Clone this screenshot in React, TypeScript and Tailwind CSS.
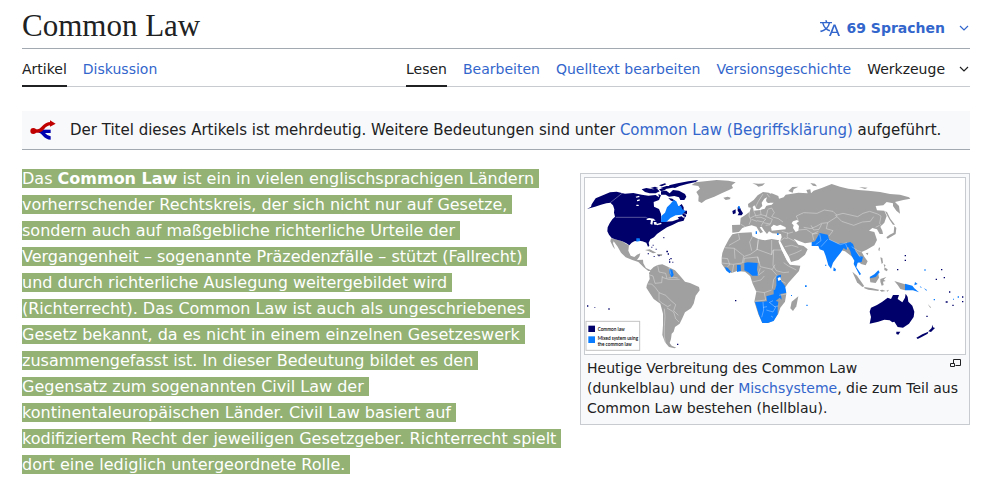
import clsx from "clsx";

const LINK = "text-[#3366cc] hover:underline";

type Tab = { label: string; active?: boolean };

const pageTabs: Tab[] = [{ label: "Artikel", active: true }, { label: "Diskussion" }];

const viewTabs: Tab[] = [
  { label: "Lesen", active: true },
  { label: "Bearbeiten" },
  { label: "Quelltext bearbeiten" },
  { label: "Versionsgeschichte" },
];

function TabLink({ label, active }: Tab) {
  return (
    <a
      href="#"
      aria-current={active ? "page" : undefined}
      className={clsx(
        "-mb-px border-b-2 pt-[10px] pb-[6px] leading-5",
        active ? "border-[#202122] text-[#202122]" : "border-transparent text-[#3366cc]",
      )}
    >
      {label}
    </a>
  );
}

function LanguageIcon() {
  return (
    <svg viewBox="0 0 20 20" className="size-5 fill-current" aria-hidden="true">
      <path d="M20 18h-1.44a.6.6 0 0 1-.4-.12.8.8 0 0 1-.23-.31L17 15h-5l-1 2.54a.8.8 0 0 1-.22.3.6.6 0 0 1-.4.14H9l4.55-11.47h1.89zm-3.53-4.31L14.89 9.5a12 12 0 0 1-.39-1.24q-.09.37-.19.69l-.19.56-1.58 4.19zm-6.3-1.58a13.4 13.4 0 0 1-2.91-1.41 11.46 11.46 0 0 0 2.81-5.37H12V4H7.31a4 4 0 0 0-.2-.56C6.87 2.79 6.6 2 6.6 2l-1.47.5s.4.89.6 1.5H0v1.33h2.15A11.23 11.23 0 0 0 5 10.7a17.2 17.2 0 0 1-5 2.1q.56.82.87 1.38a23.3 23.3 0 0 0 5.22-2.51 15.6 15.6 0 0 0 3.56 1.77zM3.63 5.33h4.91a8.1 8.1 0 0 1-2.45 4.45 9.1 9.1 0 0 1-2.46-4.45" />
    </svg>
  );
}

function Chevron() {
  return (
    <svg viewBox="0 0 12 12" className="size-3" fill="none" stroke="currentColor" strokeWidth="1.2" aria-hidden="true">
      <path d="M2 4l4 4 4-4" />
    </svg>
  );
}

function ForkIcon() {
  return (
    <svg viewBox="0 0 78 60" className="h-5 w-[26px]" aria-hidden="true">
      <g fill="none" strokeWidth="10">
        <path d="M26 34H62" stroke="#0000b0" />
        <path d="M30 34c12 2 12 20 32 20" stroke="#0000b0" />
        <path d="M10 33h14c16 0 14-22 38-22" stroke="#c00000" />
      </g>
      <circle cx="10" cy="33" r="9" fill="#c00000" />
      <path d="M60 1l17 10-17 9z" fill="#c00000" />
    </svg>
  );
}

function EnlargeIcon() {
  return (
    <svg viewBox="0 0 11 9" className="h-[9px] w-[11px]" fill="none" stroke="#202122" aria-hidden="true">
      <path d="M3.500 4V.5h7v6H5.500" />
      <path d="M.5 4.500h4v3h-4z" />
    </svg>
  );
}

// Land without common law
const GREY = [
  // Greenland, Iceland, Svalbard, Novaya Zemlya, Severnaya Zemlya
  "M320 21L332 13L360 10L395 6L430 8L452 13L440 22L444 30L432 36L410 46L388 56L362 66L350 75L340 70L341 54L334 42L345 32L340 24z",
  "M415 59L428 56L437 59L434 64L422 66z",
  "M502 16l18 1 20-1-8 7-12 3-6-5z",
  "M610 39l12-12 18-1-14 8-3 10z",
  "M676 15l14 2 6 8-12-2zM822 27l26 2-8 4z",
  // Mexico and Central America
  "M78 181L90 184L112 190L124 198L132 202L130 218L137 233L148 237L156 230L166 226L163 236L156 246L174 245L175 256L183 270L196 276L208 272L206 278L190 279L176 268L160 252L142 246L122 238L108 224L98 206L86 190L84 196L90 214L84 206L76 190z",
  "M180 216l14-2 20 10-10 2-12-6zM216 228l16 1-2 5-12 0z",
  // South America
  "M206 267L218 261L232 259L250 267L270 277L288 297L300 311L315 315L342 327L344 337L332 353L326 377L318 391L300 403L292 421L284 437L270 447L266 461L260 467L258 483L254 495L260 503L274 509L268 511L252 507L240 493L232 471L234 441L234 407L226 377L206 363L194 345L184 329L186 319L194 303L192 285L200 273z",
  // Scandinavia
  "M490 88L489 78L506 66L518 52L534 42L552 44L562 52L556 62L562 72L550 76L542 70L546 58L538 62L530 74L532 84L522 94L514 92L508 82L500 90z",
  // Europe and Asia
  "M441 141L465 140L467 120L480 112L494 101L498 88L504 88L506 98L526 96L538 92L540 84L560 80L566 74L552 74L548 50L560 46L580 54L582 62L596 58L602 50L640 44L668 46L664 36L676 34L678 46L686 38L710 30L740 18L765 26L790 32L820 36L850 38L885 42L915 48L945 50L972 58L976 62L955 66L930 72L942 84L945 107L934 98L924 84L924 76L905 72L895 82L872 84L876 97L898 98L905 114L898 134L886 146L892 158L894 168L884 168L876 154L862 150L852 158L868 162L876 186L868 202L845 215L830 222L838 236L848 250L842 262L828 258L820 250L780 220L680 193L660 196L640 188L626 182L640 200L656 204L668 214L660 230L640 246L618 252L612 236L598 214L584 192L590 178L588 168L562 166L552 160L546 168L538 158L530 146L524 148L534 162L526 166L514 146L500 142L482 146L472 150L462 162L442 164z",
  // Sakhalin, Japan, Korea, Taiwan, Hainan
  "M900 100l6 2 10 20 14 18-6 0-10-14z",
  "M928 144l6 6-2 18-10 6-14 8-4-4 10-8 12-6z",
  "M882 208l3 2-2 10-3-4zM842 226l8-2-2 8z",
  // Africa
  "M442 169L460 165L500 163L502 175L520 183L540 187L560 183L582 187L588 211L605 245L615 260L646 263L642 279L610 315L600 329L604 347L600 371L586 389L580 407L566 427L550 435L532 435L520 409L508 371L514 341L502 315L496 295L480 281L456 279L440 285L422 275L410 257L410 239L412 225L418 209L432 183z",
  "M640 355L634 385L624 399L616 391L620 371z",
  // Indonesia and the Philippines
  "M802 281l14 12 22 32-6 2-16-14z",
  "M838 327l24 4 20 4-2 4-30-4-12-4zM884 337l8-2 10 4-12 2zM904 338l8-3-4 6z",
  "M854 299l26-12 2 12-10 16-16-2z",
  "M886 303l18-6-8 8 6 4-8 2 2 10-6 2-4-12z",
  "M886 238l6 2 2 14-4 4zM896 258l6 4-4 6zM898 268l10 6-2 6-8-4z",
  "M928 309l12 4 20 6v18l-14-4-8-12z",
  "M1028 378l10 10-2 2zM196 217l5 3-6 2z",
];

const DARK = [
  // Canada and the United States
  "M20 79L32 61L50 53L75 43L95 41L120 47L145 45L170 50L190 53L212 51L222 58L220 48L228 52L222 66L206 72L207 86L222 93L228 108L229 132L262 130L284 122L300 118L296 128L280 132L262 141L246 148L230 158L216 168L207 178L196 184L191 194L193 204L189 206L184 194L172 190L160 188L148 190L140 194L133 202L124 196L112 190L90 184L80 180L72 170L67 160L68 148L74 136L82 124L90 116L87 104L88 94L84 82L76 74L64 76L48 80L30 86L6 93L18 86z",
  // Arctic islands
  "M170 34l14-4 20 4 12-2 8 8-12 6-18 0-14-4z",
  "M196 30l14-4 10 4-10 4zM222 34l18-4 2 6-14 4z",
  "M226 30l18-6 22-1-4 6-24 5zM252 22l26-6 32-6 30-4-8 6-26 6-22 6-14 6-14-2z",
  "M228 40l16-2 10 8 10-10 18 2 18 10 4 8-6 10-12 0-4-8-14-4-16 2-10-6-14 0z",
  "M250 60l12 2 10 8-14-2zM222 22l18-6 4 3-14 6z",
  // Newfoundland and the maritimes
  "M290 78l6 10 0 10 10 0 0 10-16-2-10-4 0-16zM290 106l14 4-2 8-8-4zM278 118l12-3 6 6-12 4z",
  // British Isles
  "M442 99l10-5 0 12-8 3zM458 88l6-2 4 10 6 10-4 6-12 0 4-8-4-6z",
  // Australia, Tasmania, New Zealand
  "M858 389L876 381L892 371L908 359L918 363L924 351L942 351L938 363L952 373L960 359L962 347L968 357L970 371L982 383L988 401L986 417L972 437L954 449L938 447L928 431L922 433L914 427L898 425L880 431L854 437L858 417L854 401z",
  "M934 461l12 0-6 9-6-2z",
  "M1042 440l2 8 6 2-12 12-8-2 10-10zM994 479l18-10 18-8-2 6-18 10-12 6z",
];

const LIGHT = [
  // Quebec, Louisiana, Guyana
  "M228 132L229 114L240 104L246 88L256 78L266 66L274 70L280 84L288 84L292 94L302 100L290 110L272 112L256 120L244 132z",
  "M154 181l10 0 2 8-12 2z",
  "M252 273l10 2 4 16-6 8-6-12z",
  // Scotland
  "M459 84l5 1 2 7-6 0z",
  // Pakistan, India, Bangladesh
  "M680 193L690 190L704 165L728 170L732 184L760 197L790 194L800 210L788 206L784 216L776 210L768 223L756 238L744 254L738 272L730 262L722 234L716 218L704 214L700 204L680 204z",
  "M746 268l7 6-2 6-6-2z",
  // Myanmar, Thailand, Malaysia
  "M784 196l12-4 8 6 6 18 12 18 12 2-4 16-12 2-4 14 14 20-4 4-18-34 2-10-8-14-4-14z",
  "M854 297l14-8 12-12 4 6-12 14-16 4z",
  // Papua New Guinea, Solomon Islands
  "M960 317l22 6 6 8 14 12-18-6-24 0zM990 312l8 6-10 4z",
  "M1004 324l6 4-2 2zM1016 330l10 6-2 2z",
  // West Africa
  "M478 255l10-2 30 2-2 20 4 18-18 0-12-10-12-6z",
  "M456 261l11 0 1 18-12 3zM420 267l8 2 10 12-4 5-10-8z",
  // East and southern Africa
  "M574 293l14-3 0 18 12 16 4 20-18 4-16-12 4-14z",
  "M544 355l22-6 0-14 10 2 12 14 2 14-6-6-12 10-26 0z",
  "M510 371l24 0 32-4 14 4-2 16 0 22-12 20-18 6-16 0-10-24z",
];

// Islands, too small for an outline
const DOTS = [
  "M244 218h5v5h-5zM248 226h4v4h-4zM256 240h4v4h-4zM252 250h4v4h-4zM212 212h3v3h-3zM203 200h3v3h-3zM199 206h3v3h-3zM235 177h3v4h-3zM188 226h4v3h-4zM206 234h3v3h-3zM220 232h4v3h-4zM252 244h3v3h-3zM262 251h3v3h-3z",
  "M6 382h4v4h-4zM70 391h4v4h-4zM450 366h4v4h-4zM276 497h4v4h-4zM28 388h3v2h-3z",
  "M959 231h4v4h-4zM959 245h4v4h-4zM936 273h4v4h-4zM1068 273h4v4h-4zM1052 302h4v4h-4zM1076 297h4v4h-4zM1092 340h4v4h-4zM1082 370h6v4h-6zM1102 380h4v4h-4zM1131 355h4v4h-4zM1131 369h4v4h-4zM1024 413h4v4h-4z",
];

const LIGHT_DOTS =
  "M660 322h5v5h-5zM664 380h4v4h-4zM512 160h4v8h-4zM576 166h5v5h-5zM720 260h4v3h-4zM618 351h3v3h-3zM1018 274h4v4h-4zM1046 363h4v4h-4zM1104 362h3v3h-3zM1118 355h4v4h-4z";

const WATER = [
  // Great Lakes, northern lakes
  "M184 124l8-4 14 2 6 6-8 0-2 12-6-2 2-12-12 0zM206 132l8 0 2 8-8 0zM214 138l14-4 2 4-14 4z",
  "M152 56l10-3 2 4-10 2zM156 66l8-2 0 4-8 2zM154 80l6 0 2 4-8 0z",
  // Baltic, Black Sea, Caspian, Lake Victoria
  "M532 90l6-12 4-18 3 16 14-2 0 4-14 4-6 10z",
  "M558 148l8-8 10 4 10-4 16 8 0 6-22 2-20 2z",
  "M624 130l12-4 6 4-8 6 8 8-2 14-8 4-8-12 2-8-6-6z",
  "M578 300l8-3 2 8-8 4z",
  // Red Sea
  "M580 190l6 0 14 26 16 34 0 10-10-12-16-32z",
];

const BORDERS = [
  // Europe
  "M466 138l14 8M494 102l-2 12 6 12-6 14M506 98l6 14-16 8M526 96l2 14-18 4M528 110l16 4 4-18M512 118l16 0 14 6-8 8-18-4M540 114l22 10-6 14-22-4M534 134l-6 10M548 94l12-4 8 14-8 12 20 6 14 10M542 142l14-2M500 124l16 6",
  "M510 90l10-20 14-22M546 48l8 10",
  // Asia
  "M640 128l-6-14 22-10 40 2 22-10 26 4 12 12M640 156l24-2 20 14 14-2M656 148l22 4 18-8 14-8 18-2 28-18M678 142l8 14 16-2 8-16M590 160l20 6 14-4M608 164l-2 14 24 12M584 190l14-10 10 2M600 206l20-4 20 6M612 232l22-8 16-8M686 186l-4-18 18-8M728 134l-4 18 20 6-12 16",
  "M752 112l22-6 44 10 16-10 20-6 24 8 10 6-4 22 6 8M752 112l18 18 36 12 26-10 24-2 10-14M872 148l12-6M800 206l18 12 12 4M812 218l14 20",
  // Africa
  "M460 166l4 18-32 18M418 209l30 2 30 24 18-6 20-14 4-30M502 176l-8 16 6 26M520 184l-4 32M516 214l44 16 0-44M560 230l4-14 28 0M476 235l-4 20-28 4-34-4M410 240l18 2 6 18-8 8M446 260l-4 24M448 212l2 30M476 255l2-14 40-4 4 18M518 236l8 30 36 8 8-14M526 270l-8 22M566 216l-2 46 10 16 22 6 16-2M596 254l14 10 24 12M560 274l16 18-10 12-4 28M520 292l18-14M502 312l26-6 10-12M512 340l26 4 4 22-32 4M538 344l22-8M588 308l14 8M604 348l-22 4",
  "M534 372l2 24-6 22M546 386l-12 2M552 374l12-6M544 396l20 6 8-14-18-14M568 386l12-2M558 414l6 4",
  // South America
  "M218 262l4 20 20 4 4 16M192 290l12 4 6 22 20-2 2-20M186 318l14 0 12 12 10 14 0 24 10 8M232 298l18 6 34 0M250 300l16-2 12 2M222 344l20 8 16 16 14 12-6 18 14 14M232 376l16 10 10-6M238 392l2 24-2 30 0 28 4 26M246 390l20 12 6 20 10 10M252 268l6 22",
  // US border, Alaska border, South Asia
  "M92 118h90l18 10M76 74l40-32M704 168l4 20-16 12M728 184l-20 22M732 184l34 16 20-6M782 198l6 14",
];

function WorldMap() {
  return (
    <svg viewBox="0 0 1140 528" className="block w-full bg-white" role="img" aria-label="Weltkarte des Common Law">
      <g fill="#a0a0a0">
        {GREY.map((d) => <path key={d} d={d} />)}
      </g>
      <g fill="#00006b">
        {DARK.map((d) => <path key={d} d={d} />)}
        {DOTS.map((d) => <path key={d} d={d} />)}
      </g>
      <g fill="#0a7cff">
        {LIGHT.map((d) => <path key={d} d={d} />)}
        <path d={LIGHT_DOTS} />
      </g>
      <g fill="#ffffff">
        {WATER.map((d) => <path key={d} d={d} />)}
      </g>
      <g fill="none" stroke="#ffffff" strokeOpacity="0.5" strokeWidth="2">
        {BORDERS.map((d) => <path key={d} d={d} />)}
      </g>
      <rect x="3" y="430" width="161" height="87" fill="#ffffff" stroke="#c4c4c4" strokeWidth="3" />
      <rect x="10" y="443" width="20" height="19" fill="#00006b" />
      <rect x="10" y="475" width="20" height="20" fill="#0a7cff" />
      <g fill="#000000" className="font-['Lato',sans-serif] text-[14px] font-semibold">
        <text x="38" y="458">Common law</text>
        <text x="38" y="486">Mixed system using</text>
        <text x="38" y="503">the common law</text>
      </g>
    </svg>
  );
}

export default function App() {
  return (
    <div className="min-h-screen bg-white pr-[27px] pb-5 pl-[22px] font-['DejaVu_Sans',sans-serif] text-[#202122]">
      <header>
        <div className="flex items-center justify-between border-b border-[#a2a9b1] pt-[6px] pb-[2px]">
          <h1 className="font-['Liberation_Serif',serif] text-[31px] leading-10">Common Law</h1>
          <button type="button" className="flex items-center pt-[3px] text-sm font-bold text-[#3366cc]">
            <LanguageIcon />
            <span className="mr-[13px] ml-[6px]">69 Sprachen</span>
            <Chevron />
          </button>
        </div>
        <div className="flex justify-between border-b border-[#c8ccd1] text-sm">
          <nav className="flex gap-4" aria-label="Namensräume">
            {pageTabs.map((tab) => <TabLink key={tab.label} {...tab} />)}
          </nav>
          <div className="flex gap-4">
            <nav className="flex gap-4" aria-label="Ansichten">
              {viewTabs.map((tab) => <TabLink key={tab.label} {...tab} />)}
            </nav>
            <button type="button" className="flex items-center gap-[13px] pt-[3px]">
              Werkzeuge
              <Chevron />
            </button>
          </div>
        </div>
      </header>

      <main>
        {/* Disambiguation notice */}
        <div className="mt-6 flex items-center gap-[14px] border-b border-[#a2a9b1] bg-[#f8f9fa] py-[6px] pl-2">
          <ForkIcon />
          <p className="text-[15px] leading-[26px]">
            Der Titel dieses Artikels ist mehrdeutig. Weitere Bedeutungen sind unter{" "}
            <a href="#" className={LINK}>Common Law (Begriffsklärung)</a> aufgeführt.
          </p>
        </div>

        <div className="mt-4 flex items-start gap-[23px]">
          <p className="min-w-0 flex-1 leading-[26px] text-white">
            <span className="bg-[#93b274] box-decoration-clone pr-[5px]">
              Das <b>Common Law</b> ist ein in vielen englischsprachigen Ländern vorherrschender
              Rechtskreis, der sich nicht nur auf Gesetze, sondern auch auf maßgebliche richterliche
              Urteile der Vergangenheit – sogenannte Präzedenzfälle – stützt (Fallrecht) und durch
              richterliche Auslegung weitergebildet wird (Richterrecht). Das Common Law ist auch als
              ungeschriebenes Gesetz bekannt, da es nicht in einem einzelnen Gesetzeswerk
              zusammengefasst ist. In dieser Bedeutung bildet es den Gegensatz zum sogenannten Civil
              Law der kontinentaleuropäischen Länder. Civil Law basiert auf kodifiziertem Recht der
              jeweiligen Gesetzgeber. Richterrecht spielt dort eine lediglich untergeordnete Rolle.
            </span>
          </p>

          <figure className="mt-[7px] w-[390px] shrink-0 border border-[#c8ccd1] bg-[#f8f9fa] p-[3px]">
            <a href="#" className="block border border-[#c8ccd1]">
              <WorldMap />
            </a>
            <figcaption className="px-[3px] pt-[3px] pb-[3px] text-sm leading-5">
              <a href="#" aria-label="Vergrößern" className="float-right mt-px mr-[2px] ml-1">
                <EnlargeIcon />
              </a>
              Heutige Verbreitung des Common Law (dunkelblau) und der{" "}
              <a href="#" className={LINK}>Mischsysteme</a>, die zum Teil aus Common Law bestehen
              (hellblau).
            </figcaption>
          </figure>
        </div>
      </main>
    </div>
  );
}
